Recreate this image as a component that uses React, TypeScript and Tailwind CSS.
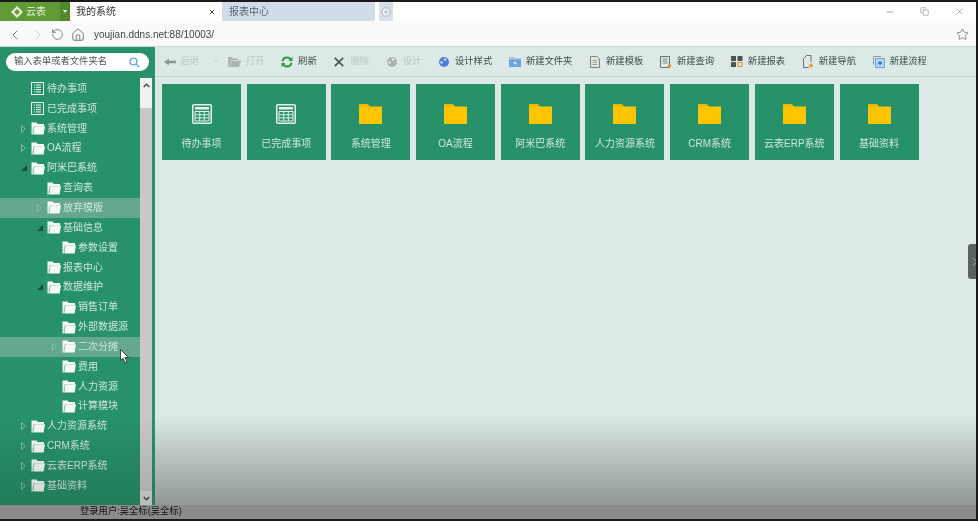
import { ChevronLeft, ChevronRight, Home, RotateCcw, Star, X, Minus, Copy } from 'lucide-react';

const CJK = "font-['Liberation_Sans','Noto_Sans_CJK_SC',sans-serif]";

type Node = { label: string; level: number; kind: 'list' | 'folder'; arrow?: 'open' | 'closed'; hover?: boolean };

const TREE: Node[] = [
  { label: '待办事项', level: 0, kind: 'list' },
  { label: '已完成事项', level: 0, kind: 'list' },
  { label: '系统管理', level: 0, kind: 'folder', arrow: 'closed' },
  { label: 'OA流程', level: 0, kind: 'folder', arrow: 'closed' },
  { label: '阿米巴系统', level: 0, kind: 'folder', arrow: 'open' },
  { label: '查询表', level: 1, kind: 'folder' },
  { label: '放弃模版', level: 1, kind: 'folder', arrow: 'closed', hover: true },
  { label: '基础信息', level: 1, kind: 'folder', arrow: 'open' },
  { label: '参数设置', level: 2, kind: 'folder' },
  { label: '报表中心', level: 1, kind: 'folder' },
  { label: '数据维护', level: 1, kind: 'folder', arrow: 'open' },
  { label: '销售订单', level: 2, kind: 'folder' },
  { label: '外部数据源', level: 2, kind: 'folder' },
  { label: '二次分摊', level: 2, kind: 'folder', arrow: 'closed', hover: true },
  { label: '费用', level: 2, kind: 'folder' },
  { label: '人力资源', level: 2, kind: 'folder' },
  { label: '计算模块', level: 2, kind: 'folder' },
  { label: '人力资源系统', level: 0, kind: 'folder', arrow: 'closed' },
  { label: 'CRM系统', level: 0, kind: 'folder', arrow: 'closed' },
  { label: '云表ERP系统', level: 0, kind: 'folder', arrow: 'closed' },
  { label: '基础资料', level: 0, kind: 'folder', arrow: 'closed' },
];

const TILES: { label: string; kind: 'table' | 'folder' }[] = [
  { label: '待办事项', kind: 'table' },
  { label: '已完成事项', kind: 'table' },
  { label: '系统管理', kind: 'folder' },
  { label: 'OA流程', kind: 'folder' },
  { label: '阿米巴系统', kind: 'folder' },
  { label: '人力资源系统', kind: 'folder' },
  { label: 'CRM系统', kind: 'folder' },
  { label: '云表ERP系统', kind: 'folder' },
  { label: '基础资料', kind: 'folder' },
];

function TreeFolder() {
  return (
    <svg width="14" height="13" viewBox="0 0 14 13" className="shrink-0">
      <path d="M0.5 0.5h5l1.2 1.5h6.3v2.3H3L1.8 12.5H0.5z" fill="#f6faf7" />
      <path d="M3.4 4.3H14L12.6 12.5H2.2z" fill="#f6faf7" />
      <path d="M0.8 12L3.3 4.4" stroke="#8fc4ad" strokeWidth="0.5" fill="none" />
    </svg>
  );
}

function TreeList() {
  return (
    <svg width="13" height="13" viewBox="0 0 13 13" className="shrink-0" fill="none" stroke="#eef6f1">
      <rect x="0.5" y="0.5" width="12" height="12" />
      <path d="M3 3h1M5 3h5M3 5.3h1M5 5.3h5M3 7.6h1M5 7.6h5M3 9.9h1M5 9.9h5" />
    </svg>
  );
}

function TreeRow({ node }: { node: Node }) {
  const indent = ['pl-[21px]', 'pl-[37px]', 'pl-[52px]'][node.level];
  return (
    <div className={`flex h-[19.85px] items-center ${indent} ${node.hover ? 'bg-[#64a88e]' : ''}`}>
      <span className="flex w-[10px] shrink-0 items-center">
        {node.arrow === 'closed' && (
          <svg width="5" height="8" viewBox="0 0 5 8">
            <path d="M0.5 0.5L4.5 4L0.5 7.5z" fill="none" stroke="#7fbfa5" />
          </svg>
        )}
        {node.arrow === 'open' && (
          <svg width="6" height="6" viewBox="0 0 6 6">
            <path d="M6 0V6H0z" fill="#24483a" />
          </svg>
        )}
      </span>
      {node.kind === 'list' ? <TreeList /> : <TreeFolder />}
      <span className={`text-[10px] leading-none whitespace-nowrap text-[#cfe6db] ${node.kind === 'list' ? 'ml-[3px]' : 'ml-[2px]'}`}>
        {node.label}
      </span>
    </div>
  );
}

function Sidebar() {
  return (
    <aside className="flex w-[155px] shrink-0 flex-col bg-[#279269]">
      <div className="h-[31px] pt-[6px] pl-[6px]">
        <div className="flex h-[18px] w-[143px] items-center justify-between rounded-full bg-white pr-[9px] pl-[8px]">
          <span className="text-[9.3px] text-[#4a5551]">输入表单或者文件夹名</span>
          <svg width="11" height="11" viewBox="0 0 11 11" fill="none" stroke="#6aa5e0" strokeWidth="1.4">
            <circle cx="4.5" cy="4.5" r="3.4" />
            <path d="M7 7l3.2 3.2" />
          </svg>
        </div>
      </div>
      <div className="flex min-h-0 flex-1">
        <div className="w-[140px] shrink-0 pt-px">
          {TREE.map((n) => (
            <TreeRow key={n.label + n.level} node={n} />
          ))}
        </div>
        <div className="flex w-[12px] flex-col bg-[#c8c8c8]">
          <div className="flex h-[30px] items-start justify-center bg-[#f1f1f1] pt-[5px]">
            <svg width="7" height="5" viewBox="0 0 7 5" fill="none" stroke="#444" strokeWidth="1.4">
              <path d="M0.7 4L3.5 1.2L6.3 4" />
            </svg>
          </div>
          <div className="flex-1" />
          <div className="flex h-[14px] items-center justify-center bg-[#dcdcdc]">
            <svg width="7" height="5" viewBox="0 0 7 5" fill="none" stroke="#444" strokeWidth="1.4">
              <path d="M0.7 1L3.5 3.8L6.3 1" />
            </svg>
          </div>
        </div>
      </div>
    </aside>
  );
}

function TableIcon() {
  return (
    <svg width="20" height="20" viewBox="0 0 20 20" fill="none" stroke="#e6f2ec">
      <rect x="0.75" y="0.75" width="18.5" height="18.5" rx="1" strokeWidth="1.5" />
      <path d="M3 3h14v2.5H3z" fill="#e6f2ec" stroke="none" />
      <path d="M3 7.5h14v9.5H3zM3 10.7h14M3 13.9h14M7.7 7.5v9.5M12.3 7.5v9.5" strokeWidth="1" />
    </svg>
  );
}

function FolderIcon() {
  return (
    <svg width="23" height="20" viewBox="0 0 23 20">
      <path d="M0 0h8.5l2.5 2.5H23V20H0z" fill="#fdc500" />
      <path d="M0 2.5h11L8.5 0H0z" fill="#f0b400" />
    </svg>
  );
}

function Tile({ label, kind }: { label: string; kind: 'table' | 'folder' }) {
  return (
    <div className="flex h-[76px] w-[79px] flex-col items-center bg-[#279269] pt-[20px]">
      <div className="flex h-[20px] items-center justify-center">{kind === 'table' ? <TableIcon /> : <FolderIcon />}</div>
      <span className="mt-[13px] text-[10px] leading-[14px] whitespace-nowrap text-[#cfe6db]">{label}</span>
    </div>
  );
}

function ToolItem({ icon, label, off }: { icon: React.ReactNode; label: string; off?: boolean }) {
  return (
    <div className="flex items-center gap-[4.5px]">
      <span className="flex h-[13px] w-[13px] items-center justify-center">{icon}</span>
      <span className={`text-[9.3px] whitespace-nowrap ${off ? 'text-[#bccac6]' : 'text-[#3f4a48]'}`}>{label}</span>
    </div>
  );
}

function Toolbar() {
  return (
    <div className="flex h-[30px] shrink-0 items-center gap-[16.2px] border-b border-[#c6d4d0] bg-[#dce9e6] pl-[8px]">
      <div className="flex items-center">
        <ToolItem
          off
          label="后退"
          icon={
            <svg width="12" height="8" viewBox="0 0 12 8">
              <path d="M0 4L5 0.5V2.8H12V5.2H5V7.5z" fill="#8a9793" />
            </svg>
          }
        />
        <span className="mr-[-6px] ml-[15px] h-0 w-0 border-x-[2.5px] border-t-[3px] border-x-transparent border-t-[#c9d6d2]" />
      </div>
      <ToolItem
        off
        label="打开"
        icon={
          <svg width="13" height="10" viewBox="0 0 13 10">
            <path d="M0 0h4l1 1.5h5V3H3L1.2 10H0z" fill="#aab5b1" />
            <path d="M3.4 3.8H13L11 10H1.8z" fill="#aab5b1" />
          </svg>
        }
      />
      <ToolItem
        label="刷新"
        icon={
          <svg width="12" height="12" viewBox="0 0 12 12" fill="none" strokeWidth="2">
            <path d="M1.5 5.2C2 2.8 4 1.5 6 1.5c1.6 0 2.8.7 3.6 1.9" stroke="#2f9a3f" />
            <path d="M10.5 6.8C10 9.2 8 10.5 6 10.5c-1.6 0-2.8-.7-3.6-1.9" stroke="#2f9a3f" />
            <path d="M11.5 0.8V5H7.5zM0.5 11.2V7H4.5z" fill="#2f9a3f" />
          </svg>
        }
      />
      <ToolItem
        off
        label="删除"
        icon={
          <svg width="10" height="10" viewBox="0 0 10 10" stroke="#4c5553" strokeWidth="1.7">
            <path d="M0.8 0.8L9.2 9.2M9.2 0.8L0.8 9.2" />
          </svg>
        }
      />
      <ToolItem
        off
        label="设计"
        icon={
          <svg width="11" height="12" viewBox="0 0 11 12">
            <circle cx="6" cy="6" r="5" fill="#a9b3b0" />
            <circle cx="7" cy="3.5" r="1.2" fill="#e4ecea" />
            <circle cx="3.5" cy="6.5" r="1.2" fill="#e4ecea" />
          </svg>
        }
      />
      <ToolItem
        label="设计样式"
        icon={
          <svg width="11" height="12" viewBox="0 0 11 12">
            <circle cx="6" cy="6" r="5" fill="#4d7fd6" />
            <circle cx="7" cy="3.5" r="1.2" fill="#dce9f8" />
            <circle cx="3.5" cy="6.5" r="1.2" fill="#dce9f8" />
          </svg>
        }
      />
      <ToolItem
        label="新建文件夹"
        icon={
          <svg width="12" height="10" viewBox="0 0 12 10">
            <path d="M0 0h4l1 1h7v9H0z" fill="#6ea3dc" />
            <path d="M0 0h4l1 1h7v1.5H0z" fill="#a9c8e8" />
            <path d="M4.5 6h3M6 4.5v3" stroke="#fff" />
          </svg>
        }
      />
      <ToolItem
        label="新建模板"
        icon={
          <svg width="10" height="12" viewBox="0 0 10 12" fill="#e6e8e0" stroke="#7d8583">
            <path d="M0.5 0.5h6.5l2.5 2.5v8.5h-9z" />
            <path d="M2.5 4.5h5M2.5 6.5h5M2.5 8.5h5" strokeWidth="0.7" fill="none" />
          </svg>
        }
      />
      <ToolItem
        label="新建查询"
        icon={
          <svg width="12" height="12" viewBox="0 0 12 12" fill="none" stroke="#6b7371">
            <path d="M0.5 0.5h9v11h-9z" />
            <path d="M2.5 3h5M2.5 5h5M2.5 7h5" strokeWidth="0.8" />
            <circle cx="9.5" cy="10" r="1.8" fill="#f09020" stroke="none" />
          </svg>
        }
      />
      <ToolItem
        label="新建报表"
        icon={
          <svg width="12" height="11" viewBox="0 0 12 11" fill="#4c5553">
            <rect width="5" height="5" />
            <rect x="6.5" width="5" height="5" />
            <rect y="6" width="5" height="5" />
            <rect x="7" y="6.5" width="4" height="4" fill="none" stroke="#e89020" />
          </svg>
        }
      />
      <ToolItem
        label="新建导航"
        icon={
          <svg width="12" height="13" viewBox="0 0 12 13" fill="none" stroke="#6b7371">
            <path d="M7 12.5H1.5V3.5L4.5 0.5h4.5V7" />
            <path d="M9 8.5v4M7 10.5h4" stroke="#f09020" strokeWidth="1.5" />
          </svg>
        }
      />
      <ToolItem
        label="新建流程"
        icon={
          <svg width="12" height="12" viewBox="0 0 12 12" fill="none">
            <path d="M0.5 8.5V0.5H8" stroke="#8a9cb5" />
            <rect x="2.5" y="2.5" width="9" height="9" stroke="#6ea3dc" fill="#b9d3ef" />
            <path d="M5 7h4M7 5v4" stroke="#2f70c0" strokeWidth="1.3" />
          </svg>
        }
      />
    </div>
  );
}

export default function App() {
  return (
    <div className={`relative flex h-[521px] w-[978px] flex-col overflow-hidden bg-[#dce9e6] ${CJK} blur-[0.6px]`}>
      <div className="h-[2px] shrink-0 bg-[#1a1a1a]" />

      {/* tab strip */}
      <div className="flex h-[19px] shrink-0 bg-white">
        <div className="flex w-[70px] items-center bg-[#5f9a35] text-white">
          <span className="flex w-[60px] items-center gap-[3px] pl-[11px]">
            <svg width="12" height="12" viewBox="0 0 12 12">
              <path d="M6 0L12 6L6 12L0 6z" fill="#e6f0dc" />
              <path d="M6 3L9 6L6 9L3 6z" fill="#5f9a35" />
            </svg>
            <span className="text-[10px] text-[#e8f2df]">云表</span>
          </span>
          <span className="flex h-full w-[10px] items-center justify-center bg-[#4f8a2a]">
            <span className="h-0 w-0 border-x-[2.5px] border-t-[3px] border-x-transparent border-t-white" />
          </span>
        </div>
        <div className="flex w-[152px] items-center justify-between bg-white pr-[6px] pl-[6px]">
          <span className="text-[10px] text-[#333]">我的系统</span>
          <X size={8} strokeWidth={3} className="text-[#444]" />
        </div>
        <div className="flex w-[153px] items-center bg-[#d2dce8] pl-[7px]">
          <span className="text-[10px] text-[#5b6570]">报表中心</span>
        </div>
        <div className="ml-[4px] flex w-[14px] items-center justify-center bg-[#d8dfe6]">
          <svg width="10" height="10" viewBox="0 0 10 10" fill="#f4f6f8" stroke="#9aa5ae" strokeWidth="0.8">
            <circle cx="5" cy="5" r="4.2" />
            <path d="M5 2.8v4.4M2.8 5h4.4" />
          </svg>
        </div>
        <div className="ml-auto flex items-center gap-[25px] pr-[13px] text-[#666]">
          <Minus size={10} strokeWidth={1.5} />
          <Copy size={9} strokeWidth={1.3} />
          <X size={11} strokeWidth={1} />
        </div>
      </div>

      {/* address bar */}
      <div className="flex h-[26px] shrink-0 items-center border-b border-[#cfd6d3] bg-[#fafafa] pt-[2px] pr-[9px] pl-[7px]">
        <ChevronLeft size={16} strokeWidth={1.2} className="text-[#555]" />
        <ChevronRight size={16} strokeWidth={1.2} className="ml-[7px] text-[#c4c4c4]" />
        <RotateCcw size={13} strokeWidth={1.3} className="ml-[5px] text-[#555]" />
        <Home size={14} strokeWidth={1.3} className="ml-[7px] text-[#555]" />
        <span className="ml-[9px] text-[10px] text-[#444]">youjian.ddns.net:88/10003/</span>
        <Star size={13} strokeWidth={1.2} className="ml-auto text-[#555]" />
      </div>

      {/* body */}
      <div className="flex min-h-0 flex-1">
        <Sidebar />
        <div className="flex min-w-0 flex-1 flex-col">
          <Toolbar />
          <div className="flex gap-[5.7px] pt-[7px] pl-[7px]">
            {TILES.map((t) => (
              <Tile key={t.label} label={t.label} kind={t.kind} />
            ))}
          </div>
        </div>
      </div>

      {/* status bar */}
      <div className="flex h-[14px] shrink-0 items-center bg-[#8b8b8b] pl-[80px]">
        <span className="text-[9.3px] text-[#111]">登录用户:吴全标(吴全标)</span>
      </div>
      <div className="h-[2px] shrink-0 bg-[#1a1a1a]" />

      {/* video overlay shading: the player fades the frame more over the light pane than over the tree */}
      <div className="pointer-events-none absolute bottom-[16px] left-0 h-[90px] w-[155px] bg-gradient-to-b from-transparent to-[#00000026]" />
      <div className="pointer-events-none absolute right-0 bottom-[16px] left-[155px] h-[90px] bg-gradient-to-b from-transparent to-[#00000059]" />

      {/* collapsed side handle */}
      <div className="absolute top-[244px] right-[2px] flex h-[35px] w-[8px] items-center justify-start overflow-hidden rounded-l-[3px] bg-[#5a6361]">
        <ChevronRight size={14} strokeWidth={1.5} className="shrink-0 text-[#b5bcba]" />
      </div>
      <div className="absolute top-0 right-0 bottom-0 w-[2px] bg-[#1a1a1a]" />

      {/* mouse pointer */}
      <svg width="10" height="15" viewBox="0 0 10 15" className="absolute top-[349px] left-[120px]">
        <path d="M0.5 0.5V11.5L3 9.2L5 13.8L7 13L5 8.5H8.5z" fill="#fff" stroke="#222" strokeWidth="0.8" />
      </svg>
    </div>
  );
}
